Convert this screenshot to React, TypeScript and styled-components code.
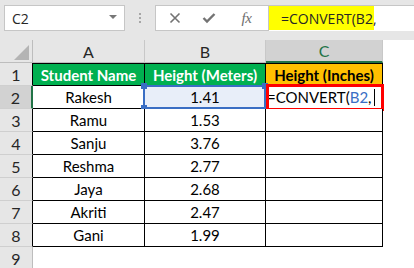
import styled, { createGlobalStyle } from "styled-components";

const GlobalStyle = createGlobalStyle`
    html, body {
        margin: 0;
        padding: 0;
        background: #ffffff;
    }
    * {
        box-sizing: border-box;
    }
`

const Screen = styled.div`
    width: 414px;
    height: 268px;
    overflow: hidden;
    background: #ffffff;
    font-family: Lato, "Open Sans", sans-serif;
`

const FormulaBar = styled.div`
    height: 40px;
    background: #e6e6e6;
    display: flex;
    align-items: flex-start;
    padding: 5px 0 0 4px;
`

const NameBox = styled.div`
    width: 121px;
    height: 26px;
    background: #ffffff;
    border: 1px solid #c6c6c6;
    display: flex;
    align-items: center;
    justify-content: space-between;
    padding: 0 7px 0 7px;
    font-family: "Open Sans", sans-serif;
    font-size: 14px;
    color: #262626;
`

const DropArrow = styled.span`
    width: 0;
    height: 0;
    border-left: 4px solid transparent;
    border-right: 4px solid transparent;
    border-top: 4px solid #777777;
    margin-bottom: 2px;
`

const Grip = styled.div`
    width: 30px;
    height: 26px;
    display: flex;
    flex-direction: column;
    align-items: center;
    justify-content: center;
    gap: 2px;
`

const GripDot = styled.span`
    width: 2px;
    height: 2px;
    background: #a6a6a6;
`

const ButtonBox = styled.div`
    width: 114px;
    height: 26px;
    background: #ffffff;
    border: 1px solid #c6c6c6;
    display: flex;
    align-items: center;
`

const IconSlot = styled.span<{ $w: number }>`
    width: ${p => p.$w}px;
    display: flex;
    justify-content: center;
    align-items: center;
    color: #737373;
`

const FxText = styled.span`
    font-family: "Liberation Serif", serif;
    font-style: italic;
    font-size: 15px;
    color: #6d6d6d;
    letter-spacing: -0.5px;
`

const FormulaInput = styled.div`
    flex: 1;
    height: 26px;
    margin-left: -1px;
    background: #ffffff;
    border-top: 1px solid #c6c6c6;
    border-left: 1px solid #c6c6c6;
    display: flex;
`

const FormulaHighlight = styled.div`
    width: 105px;
    height: 24px;
    background: #ffff00;
    padding-left: 12px;
    display: flex;
    align-items: center;
    font-family: "Open Sans", sans-serif;
    font-size: 14px;
    color: #262626;
    white-space: nowrap;
`

const Sheet = styled.div`
    display: grid;
    grid-template-columns: 33px 112px 121px 117px 1fr;
    grid-auto-rows: 23px;
`

const Corner = styled.div`
    background: #e6e6e6;
    border-right: 1px solid #bdbdbd;
    border-bottom: 1px solid #bdbdbd;
    position: relative;
    display: flex;
    align-items: flex-end;
    justify-content: flex-end;
    padding: 0 3px 2px 0;
`

const ColHead = styled.div<{ $selected?: boolean; $blank?: boolean }>`
    background: ${p => (p.$blank ? "#ffffff" : p.$selected ? "#d2d2d2" : "#e6e6e6")};
    border-right: ${p => (p.$blank ? "none" : "1px solid #c8c8c8")};
    border-bottom: ${p => (p.$selected ? "2px solid #217346" : p.$blank ? "none" : "1px solid #bdbdbd")};
    color: ${p => (p.$selected ? "#217346" : "#262626")};
    display: flex;
    align-items: center;
    justify-content: center;
    font-size: 16px;
`

const RowHead = styled.div<{ $selected?: boolean; $inRange?: boolean }>`
    background: ${p => (p.$selected ? "#d2d2d2" : "#e6e6e6")};
    border-bottom: 1px solid #cfcfcf;
    border-right: ${p => (p.$selected ? "2px solid #217346" : p.$inRange ? "1px solid #000000" : "1px solid #bdbdbd")};
    color: #262626;
    display: flex;
    align-items: center;
    justify-content: center;
    font-size: 16px;
`

const Cell = styled.div<{ $fill?: string; $head?: boolean; $dark?: boolean; $top?: boolean; $left?: boolean }>`
    position: relative;
    background: ${p => p.$fill ?? "#ffffff"};
    border-right: 1px solid #000000;
    border-bottom: 1px solid #000000;
    border-top: ${p => (p.$top ? "1px solid #000000" : "none")};
    display: flex;
    align-items: center;
    justify-content: ${p => (p.$left ? "flex-start" : "center")};
    padding-left: ${p => (p.$left ? "1px" : "0")};
    font-size: 15px;
    font-weight: ${p => (p.$head ? 700 : 400)};
    color: ${p => (p.$head && !p.$dark ? "#ffffff" : "#000000")};
    white-space: nowrap;
    overflow: visible;
`

const EmptyCell = styled.div`
    background: #ffffff;
`

const RefBox = styled.div`
    position: absolute;
    left: -2px;
    top: -1px;
    right: -1px;
    bottom: -1px;
    border: 2px solid #3a6ec4;
    pointer-events: none;
`

const Handle = styled.span<{ $x: "l" | "r"; $y: "t" | "b" }>`
    position: absolute;
    width: 6px;
    height: 6px;
    background: #3a6ec4;
    ${p => (p.$x === "l" ? "left: -4px;" : "right: -4px;")}
    ${p => (p.$y === "t" ? "top: -4px;" : "bottom: -4px;")}
`

const Annotation = styled.div`
    position: absolute;
    left: 0;
    top: -2px;
    right: -2px;
    bottom: -3px;
    border: 3px solid #ff0000;
    pointer-events: none;
`

const RefText = styled.span`
    color: #3a6ec4;
`

const Caret = styled.span`
    display: inline-block;
    width: 1px;
    height: 17px;
    background: #000000;
    margin-left: 2px;
    vertical-align: middle;
`

const students: [string, string][] = [
    ["Rakesh", "1.41"],
    ["Ramu", "1.53"],
    ["Sanju", "3.76"],
    ["Reshma", "2.77"],
    ["Jaya", "2.68"],
    ["Akriti", "2.47"],
    ["Gani", "1.99"],
]

function CancelIcon() {
    return (
        <svg width="12" height="12" viewBox="0 0 12 12">
            <path d="M1.5 1.5 L10.5 10.5 M10.5 1.5 L1.5 10.5" stroke="#737373" strokeWidth="1.6" fill="none"/>
        </svg>
    )
}

function CheckIcon() {
    return (
        <svg width="14" height="12" viewBox="0 0 14 12">
            <path d="M1.5 6 L5 9.5 L12.5 2" stroke="#737373" strokeWidth="2.4" fill="none"/>
        </svg>
    )
}

export default function App() {
    return (
        <Screen>
            <GlobalStyle/>
            <FormulaBar>
                <NameBox>
                    <span>C2</span>
                    <DropArrow/>
                </NameBox>
                <Grip>
                    <GripDot/>
                    <GripDot/>
                    <GripDot/>
                </Grip>
                <ButtonBox>
                    <IconSlot $w={38}><CancelIcon/></IconSlot>
                    <IconSlot $w={32}><CheckIcon/></IconSlot>
                    <IconSlot $w={44}><FxText>fx</FxText></IconSlot>
                </ButtonBox>
                <FormulaInput>
                    <FormulaHighlight>=CONVERT(B2,</FormulaHighlight>
                </FormulaInput>
            </FormulaBar>
            <Sheet>
                <Corner>
                    <svg width="15" height="15" viewBox="0 0 15 15">
                        <polygon points="15,0 15,15 0,15" fill="#b4b4b4"/>
                    </svg>
                </Corner>
                <ColHead>A</ColHead>
                <ColHead>B</ColHead>
                <ColHead $selected>C</ColHead>
                <ColHead $blank/>

                <RowHead $inRange>1</RowHead>
                <Cell $top $head $fill="#00b050">Student Name</Cell>
                <Cell $top $head $fill="#00b050">Height (Meters)</Cell>
                <Cell $top $head $dark $fill="#ffc000">Height (Inches)</Cell>
                <EmptyCell/>

                {students.map(([name, height], i) => (
                    <Row key={name} index={i + 2} name={name} height={height}/>
                ))}

                <RowHead>9</RowHead>
                <EmptyCell/>
                <EmptyCell/>
                <EmptyCell/>
                <EmptyCell/>
            </Sheet>
        </Screen>
    )
}

function Row({ index, name, height }: { index: number; name: string; height: string }) {
    const active = index === 2
    return (
        <>
            <RowHead $inRange $selected={active}>{index}</RowHead>
            <Cell>{name}</Cell>
            <Cell $fill={active ? "#e8eef9" : undefined}>
                {height}
                {active && (
                    <RefBox>
                        <Handle $x="l" $y="t"/>
                        <Handle $x="l" $y="b"/>
                        <Handle $x="r" $y="t"/>
                    </RefBox>
                )}
            </Cell>
            <Cell $left={active}>
                {active && (
                    <>
                        <span>=CONVERT(<RefText>B2</RefText>,</span>
                        <Caret/>
                        <Annotation/>
                    </>
                )}
            </Cell>
            <EmptyCell/>
        </>
    )
}
